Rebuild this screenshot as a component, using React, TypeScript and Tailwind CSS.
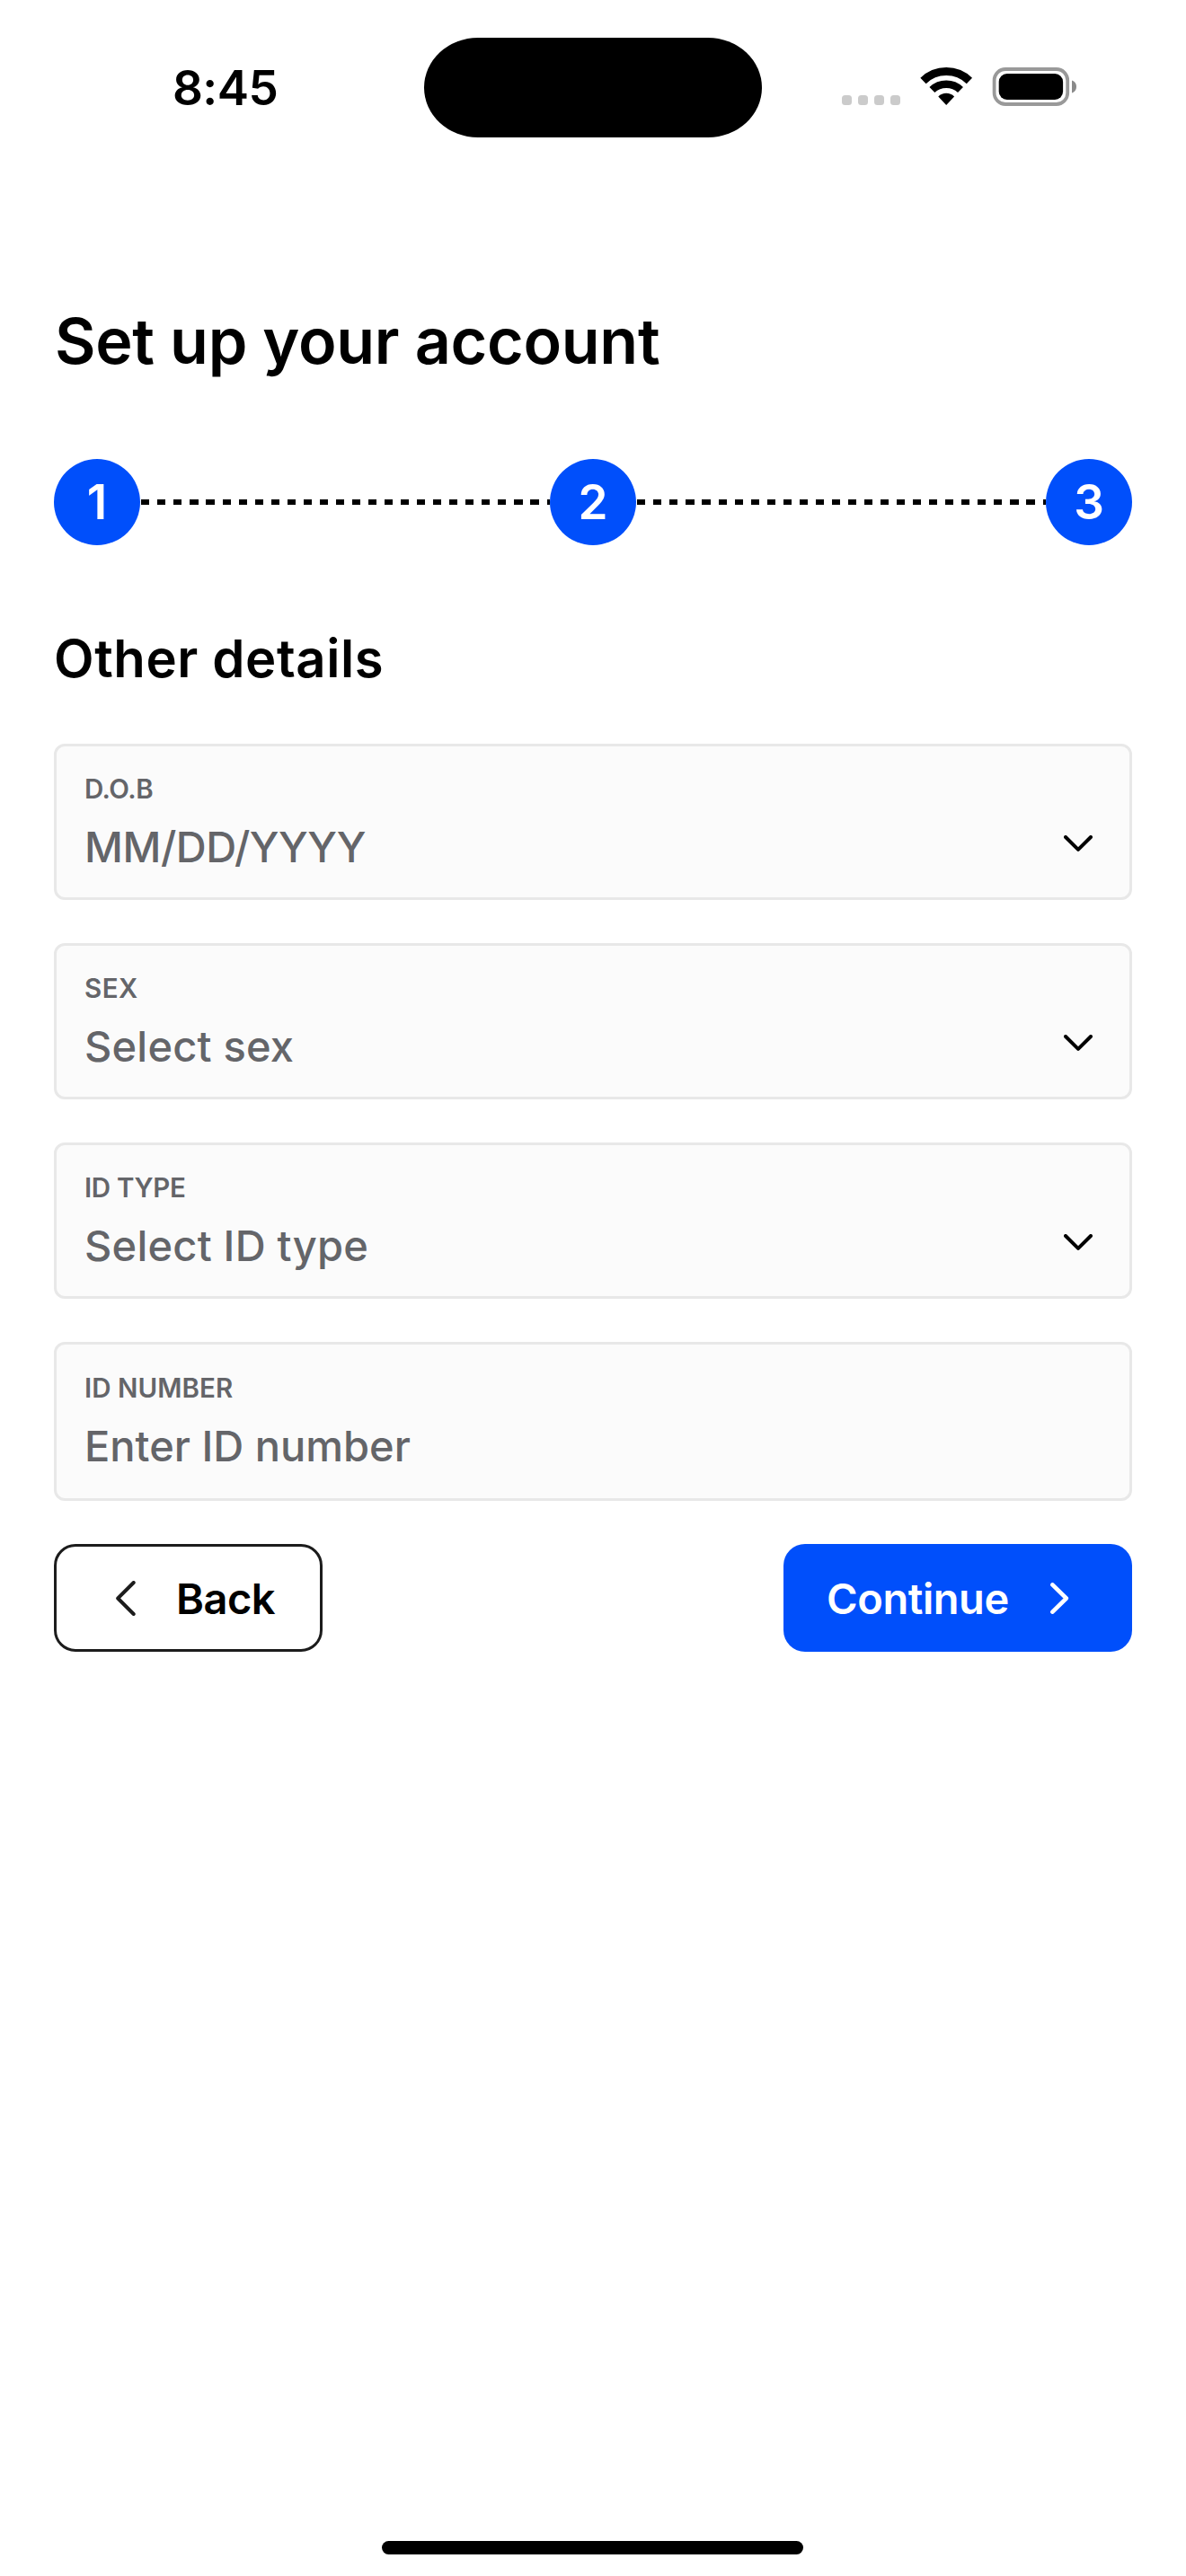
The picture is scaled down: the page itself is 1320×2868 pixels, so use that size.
import React from "react";

type FieldProps = {
  label: string;
  value: string;
  labelClass: string;
  valueClass: string;
  boxClass: string;
  dropdown?: boolean;
};

const fields: FieldProps[] = [
  { label: "D.O.B", value: "MM/DD/YYYY", labelClass: "tracking-[-0.4px]", valueClass: "tracking-[-0.45px]", boxClass: "h-[174px] pt-[29px]", dropdown: true },
  { label: "SEX", value: "Select sex", labelClass: "tracking-[0.5px]", valueClass: "tracking-[0.2px]", boxClass: "h-[174px] pt-[29px]", dropdown: true },
  { label: "ID TYPE", value: "Select ID type", labelClass: "tracking-[-0.3px]", valueClass: "tracking-[0.22px]", boxClass: "h-[174px] pt-[29px]", dropdown: true },
  { label: "ID NUMBER", value: "Enter ID number", labelClass: "tracking-[0.05px]", valueClass: "tracking-[0px]", boxClass: "h-[177px] pt-[30px]" },
];

function StatusBar() {
  return (
    <div className="flex h-[194px] items-center pl-[192px]">
      <span className="w-[280px] pt-[2px] text-[53px] leading-[64px] font-semibold tracking-[-0.57px]">8:45</span>
      <div className="h-[111px] w-[376px] rounded-[60px/55.5px] bg-black" />
      <div className="ml-[89px] flex gap-[7px] pt-[29px]">
        {[0, 1, 2, 3].map((i) => (
          <span key={i} className="size-[11px] rounded-[3.5px] bg-[#cbcbcb]" />
        ))}
      </div>
      <svg className="mb-[2px] ml-[22px]" width="60" height="42" viewBox="0 0 60 42" fill="none">
        <path d="M3.5 15A37 37 0 0 1 54.9 15" stroke="#000" strokeWidth="9" />
        <path d="M13.4 25A23 23 0 0 1 45 25" stroke="#000" strokeWidth="8.6" />
        <path d="M29.2 42L20.3 32.4A12.6 12.6 0 0 1 38.1 32.4Z" fill="#000" />
      </svg>
      <svg className="mb-px ml-[20px]" width="96" height="43" viewBox="0 0 96 43" fill="none">
        <rect x="2.6" y="2" width="81.6" height="39" rx="12.5" stroke="#999" strokeWidth="3.8" />
        <rect x="7.7" y="7" width="71.4" height="29" rx="9" fill="#000" />
        <path d="M89 14.6C92 15.4 94 18.2 94 21.6C94 25 92 27.8 89 28.6Z" fill="#8a8a8a" />
      </svg>
    </div>
  );
}

function Step({ n }: { n: number }) {
  return (
    <div className="flex size-24 shrink-0 items-center justify-center rounded-full bg-[#004ffb] text-[53px] leading-none font-semibold text-white">
      {n}
    </div>
  );
}

function Dashes() {
  return (
    <div className="h-[6px] flex-1 bg-[repeating-linear-gradient(90deg,transparent_0_1.3px,#000_1.3px_10.4px,transparent_10.4px_18.05px)]" />
  );
}

function Field({ label, value, labelClass, valueClass, boxClass, dropdown }: FieldProps) {
  return (
    <div className={`flex items-start justify-between rounded-xl border-[3px] border-[#e8e8e8] bg-[#fbfbfb] pr-[41px] pl-[31px] text-[#646569] ${boxClass}`}>
      <div className="flex flex-col gap-[19px]">
        <span className={`text-[29.5px] leading-[36px] font-semibold ${labelClass}`}>{label}</span>
        <span className={`text-[47px] leading-[56px] font-medium ${valueClass}`}>{value}</span>
      </div>
      {dropdown && (
        <svg className="mt-[70px]" width="32" height="18" viewBox="0 0 32 18" fill="none" stroke="#000" strokeWidth="4" strokeLinecap="round" strokeLinejoin="round">
          <path d="M2 2L16 15.8L30 2" />
        </svg>
      )}
    </div>
  );
}

export default function App() {
  return (
    <div className="flex h-[2868px] w-[1320px] flex-col bg-white font-['Inter',sans-serif] text-black">
      <StatusBar />
      <main className="flex flex-col px-[60px]">
        <h1 className="mt-[144px] pl-px text-[70px] leading-[84px] font-semibold tracking-[-0.3px]">Set up your account</h1>
        <div className="mt-[89px] flex items-center">
          <Step n={1} />
          <Dashes />
          <Step n={2} />
          <Dashes />
          <Step n={3} />
        </div>
        <h2 className="mt-[91px] text-[58px] leading-[70px] font-semibold tracking-[0.6px]">Other details</h2>
        <div className="mt-[60px] flex flex-col gap-12">
          {fields.map((f) => (
            <Field key={f.label} {...f} />
          ))}
        </div>
        <div className="mt-12 flex justify-between">
          <button className="flex h-[120px] w-[299px] items-center gap-[45px] rounded-3xl border-[3px] border-[#1c1c1c] pl-[66px] text-[47px] leading-none font-semibold tracking-[-0.5px]">
            <svg width="22" height="39" viewBox="0 0 22 39" fill="none" stroke="#1c1c1c" strokeWidth="4" strokeLinecap="round" strokeLinejoin="round">
              <path d="M19.7 2L2.2 19.5L19.7 37" />
            </svg>
            Back
          </button>
          <button className="flex h-[120px] w-[388px] items-center justify-between rounded-3xl bg-[#004ffb] pr-[70px] pl-12 text-[47px] leading-none font-semibold tracking-[-0.43px] text-white">
            Continue
            <svg width="21" height="35" viewBox="0 0 21 35" fill="none" stroke="#fff" strokeWidth="4.6" strokeLinecap="round" strokeLinejoin="round">
              <path d="M2.4 2.4L17.8 17.5L2.4 32.6" />
            </svg>
          </button>
        </div>
      </main>
      <div className="mt-auto mb-6 ml-[425px] h-[15px] w-[469px] rounded-full bg-black" />
    </div>
  );
}
